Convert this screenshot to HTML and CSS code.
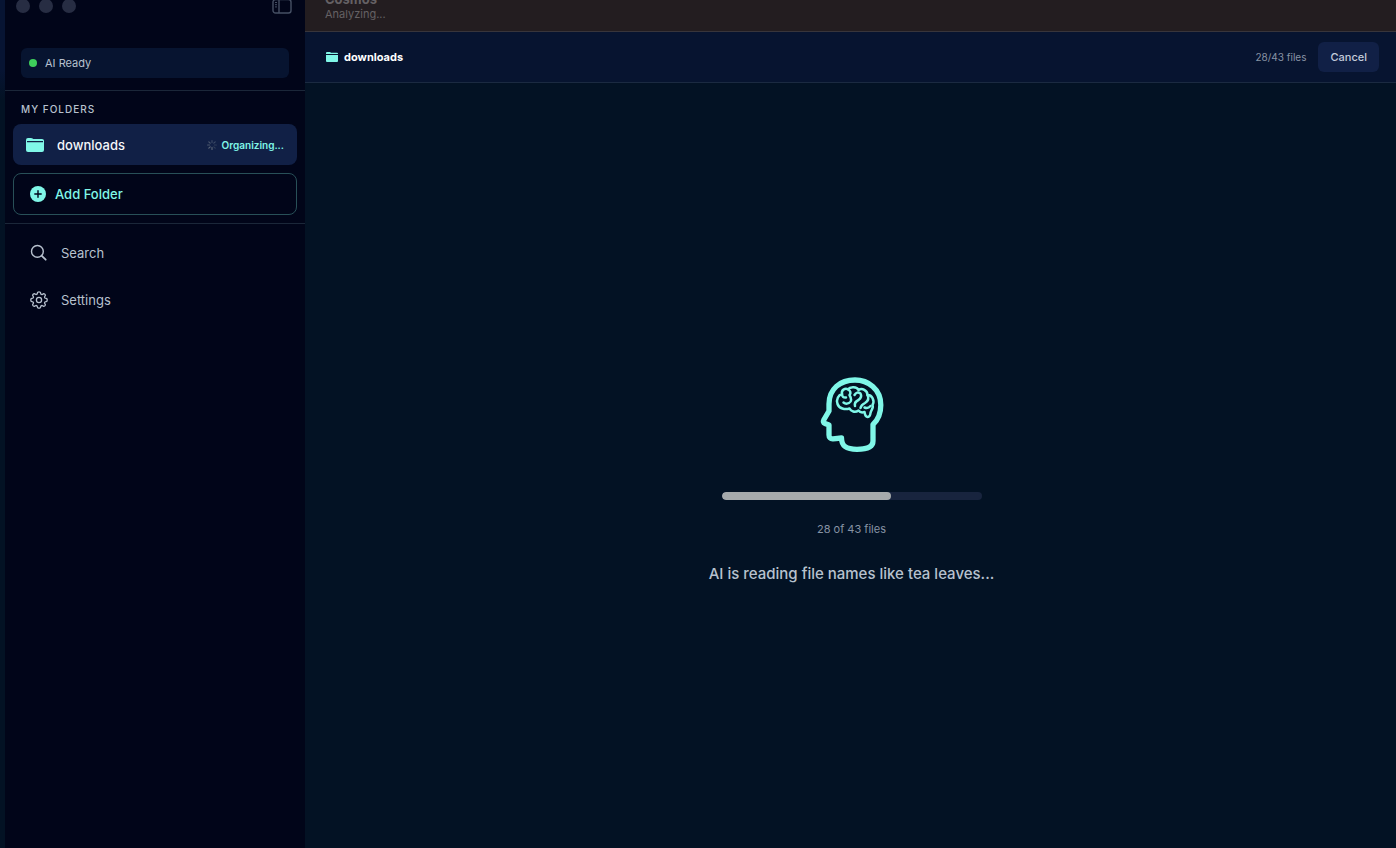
FILE: index.html
```html
<!DOCTYPE html>
<html lang="en">
<head>
    <meta charset="UTF-8">
    <meta name="viewport" content="width=device-width, initial-scale=1.0">
    <title>Cosmos</title>
    <link rel="stylesheet" href="styles.css">
</head>
<body>

    <aside class="sidebar">
        <div class="window-bar">
            <span class="dot"></span>
            <span class="dot"></span>
            <span class="dot"></span>
            <button class="toggle" aria-label="Toggle sidebar">
                <svg width="20" height="16" viewBox="0 0 20 16" fill="none" stroke="currentColor">
                    <rect x="1" y="1.500" width="18" height="13.500" rx="2.500" stroke-width="1.400"/>
                    <path d="M7 1.500v13.500" stroke-width="1.400"/>
                    <path d="M3 4.500h2M3 6.700h2M3 8.900h2" stroke-width="1"/>
                </svg>
            </button>
        </div>

        <div class="status"><span class="status-dot"></span>AI Ready</div>

        <section class="folders">
            <h2>MY FOLDERS</h2>
            <button class="folder">
                <svg width="18" height="14" viewBox="0 0 18 14">
                    <path d="M0 3V2Q0 0 2 0h3q1 0 1.6.6L7.3 1H16q2 0 2 2z" fill="currentColor"/>
                    <path d="M0 4.2h18V12q0 2-2 2H2q-2 0-2-2z" fill="currentColor"/>
                    <path d="M.5 2.5v3M17.5 2.500v3" stroke="currentColor"/>
                </svg>
                <span class="folder-name">downloads</span>
                <svg class="spinner" width="10" height="10" viewBox="0 0 10 10" stroke-width="1.200" stroke-linecap="round">
                    <path d="M5 .6v2M8.2 1.8L6.8 3.2" stroke="#3b4966"/>
                    <path d="M9.4 5h-2M8.2 8.2L6.8 6.8" stroke="#2f3c59"/>
                    <path d="M5 9.4v-2M1.8 8.2l1.4-1.4" stroke="#5a6476"/>
                    <path d="M.6 5h2M1.8 1.8l1.4 1.4" stroke="#4a566d"/>
                </svg>
                <span class="folder-state">Organizing...</span>
            </button>
            <button class="add-folder">
                <svg width="16" height="16" viewBox="0 0 16 16">
                    <circle cx="8" cy="8" r="8" fill="currentColor"/>
                    <path d="M8 4.8v6.4M4.8 8h6.4" stroke="#010519" stroke-width="1.4" stroke-linecap="round"/>
                </svg>
                Add Folder
            </button>
        </section>

        <nav class="menu">
            <a href="#search">
                <svg width="18" height="18" viewBox="0 0 18 18" fill="none" stroke="currentColor" stroke-width="1.4" stroke-linecap="round">
                    <circle cx="7.4" cy="7.4" r="5.9"/>
                    <path d="M11.8 11.8l3.900 3.900" stroke-width="1.8"/>
                </svg>
                Search
            </a>
            <a href="#settings">
                <svg width="18" height="18" viewBox="0 0 18 18" fill="none" stroke="currentColor" stroke-width="1.3" stroke-linejoin="round">
                    <circle cx="9" cy="9" r="2.6"/>
                    <path d="M7.7 1.2Q9 .4 10.3 1.2L11 3.2Q11.500 3.500 12 3.600L13.800 2.700Q15.100 3 15.400 4.200L14.500 6Q14.600 6.600 14.900 7L16.800 7.700Q17.600 9 16.800 10.300L14.900 11Q14.600 11.500 14.500 12L15.400 13.800Q15.100 15.100 13.800 15.400L12 14.500Q11.500 14.600 11 14.900L10.300 16.800Q9 17.600 7.700 16.800L7 14.900Q6.500 14.600 6 14.500L4.200 15.400Q2.900 15.100 2.600 13.800L3.500 12Q3.400 11.500 3.100 11L1.200 10.300Q.4 9 1.200 7.700L3.100 7Q3.400 6.500 3.500 6L2.600 4.200Q2.900 2.900 4.200 2.600L6 3.500Q6.500 3.400 7 3.200z"/>
                </svg>
                Settings
            </a>
        </nav>
    </aside>

    <main class="content">
        <header class="titlebar">
            <h1>Cosmos</h1>
            <p>Analyzing...</p>
        </header>

        <div class="toolbar">
            <svg width="12" height="10" viewBox="0 0 12 10">
                <path d="M0 2V1q0-1 1-1h3l1 .8h6q1 0 1 1V2z" fill="currentColor"/>
                <path d="M0 2.9h12V9q0 1-1 1H1q-1 0-1-1z" fill="currentColor"/>
            </svg>
            <h2>downloads</h2>
            <span class="count">28/43 files</span>
            <button class="cancel">Cancel</button>
        </div>

        <section class="progress-view">
            <svg width="64" height="76" viewBox="20 16 64 76" fill="none" stroke="currentColor" stroke-linecap="round" stroke-linejoin="round">
                <path stroke-width="5.300" d="M55 20C68 20 80.800 29 80.800 45C80.800 54 78 60 73 64.500V81C73 87 68 89.300 57 89.300C46 89.300 41.500 86 41.500 78L33 78.800Q29 79 29 75V65L25 63.500Q22.500 62.500 24 59.500L29 51V44C29 29 40 20 55 20Z"/>
                <g stroke-width="2.500">
                    <path d="M42 34C41 30 45 28 48 29.300C50 26.500 57 26.500 58.500 30C62 27.500 67.500 30.500 67.500 35C72 34.500 75 41 72.500 45C74 48 71 50 70.500 53C70 58.500 65.500 58.500 64.500 52C62 52.800 60 52.500 58.500 50.500C55 53 51 51.500 49.500 48.500C45 50 39 48.500 37.500 44C36 39 38.500 35 42 34Z"/>
                    <path d="M42 34Q42 38 46 37.500M48 29.300Q52 32 49.500 35Q53 41 49 43Q46 44.500 43.500 42.500M54.500 35Q57 31 60.500 33.500Q62.500 37 58.500 40Q54 42 55 46M67.500 35Q70 40 65 43Q61 45 60.500 48M70.500 46Q68 49 64.500 47.500"/>
                </g>
            </svg>
            <progress value="28" max="43" aria-label="Files analyzed"></progress>
            <p class="progress-count">28 of 43 files</p>
            <p class="message">AI is reading file names like tea leaves...</p>
        </section>
    </main>

</body>
</html>
```
FILE: styles.css
```css
* {
    box-sizing: border-box;
}

body {
    display: flex;
    min-height: 100vh;
    margin: 0;
    padding-left: 5px;
    font-family: Inter, 'Liberation Sans', sans-serif;
    background: linear-gradient(to bottom, #071433 70px, #031224 100px);
    color: #b7c1ce;
}

h1, h2, p {
    margin: 0;
}

svg {
    flex-shrink: 0;
}

button {
    border: none;
    font-family: inherit;
    cursor: pointer;
}

/* Sidebar */
.sidebar {
    width: 300px;
    flex-shrink: 0;
    background-color: #010519;
}

.window-bar {
    display: flex;
    align-items: flex-end;
    gap: 9px;
    height: 14px;
    padding: 0 13px 0 11px;
    overflow: hidden;
}

.dot {
    width: 14px;
    height: 14px;
    margin-bottom: 1px;
    border-radius: 50%;
    background-color: #272d43;
}

.toggle {
    display: flex;
    margin-left: auto;
    padding: 0;
    background: none;
    color: #465064;
}

.status {
    display: flex;
    align-items: center;
    gap: 8px;
    height: 30px;
    margin: 34px 16px 12px;
    padding: 0 8px;
    border-radius: 6px;
    background-color: #071430;
    font-size: 11px;
}

.status-dot {
    width: 8px;
    height: 8px;
    border-radius: 50%;
    background-color: #3ecf5b;
}

.folders {
    display: flex;
    flex-direction: column;
    padding: 11px 8px 8px;
    border-top: 1px solid #1b2739;
    border-bottom: 1px solid #1b2739;
}

.folders h2 {
    margin: 0 8px 8px;
    font-size: 10px;
    line-height: 14px;
    font-weight: 500;
    letter-spacing: 1px;
}

.folder {
    display: flex;
    align-items: center;
    height: 41px;
    margin-bottom: 8px;
    padding: 0 13px;
    border-radius: 8px;
    background-color: #112046;
    color: #80f7e8;
}

.folder-name {
    margin-left: 13px;
    font-size: 13px;
    font-weight: 500;
    color: #f4f6fa;
}

.spinner {
    margin-left: auto;
}

.folder-state {
    margin-left: 5px;
    font-size: 10px;
    line-height: 14px;
    font-weight: 600;
}

.add-folder {
    display: flex;
    align-items: center;
    gap: 9px;
    height: 42px;
    padding: 0 16px;
    border: 1px solid #285058;
    border-radius: 8px;
    background: none;
    color: #80f7e8;
    font-size: 13px;
    font-weight: 500;
}

.menu {
    padding-top: 5px;
}

.menu a {
    display: flex;
    align-items: center;
    gap: 13px;
    height: 47px;
    padding: 0 25px;
    color: #b7c1ce;
    font-size: 13px;
    text-decoration: none;
}

/* Main area */
.content {
    display: flex;
    flex-direction: column;
    flex: 1;
    background-color: #031224;
}

.titlebar {
    display: flex;
    flex-direction: column;
    justify-content: flex-end;
    height: 32px;
    padding: 0 20px 10px;
    border-bottom: 1px solid #38353b;
    background-color: #231d20;
    color: #656164;
    overflow: hidden;
}

.titlebar h1 {
    font-size: 13px;
    line-height: 16px;
    font-weight: 700;
}

.titlebar p {
    font-size: 11px;
    line-height: 14px;
}

.toolbar {
    display: flex;
    align-items: center;
    height: 51px;
    padding: 0 17px 0 21px;
    border-bottom: 1px solid #1b2a41;
    background-color: #071430;
    color: #80f7e8;
}

.toolbar h2 {
    margin-left: 6px;
    font-size: 11px;
    font-weight: 700;
    color: #ffffff;
}

.count {
    margin-left: auto;
    font-size: 10px;
    color: #8793a4;
}

.cancel {
    height: 30px;
    margin-left: 12px;
    padding: 0 12px;
    border-radius: 6px;
    background-color: #112046;
    color: #c3cbda;
    font-size: 11px;
    font-weight: 500;
}

.progress-view {
    display: flex;
    flex-direction: column;
    align-items: center;
    justify-content: center;
    flex: 1;
    padding-top: 28px;
    padding-left: 2px;
    color: #80f7e8;
}

progress {
    width: 260px;
    height: 8px;
    margin: 40px 0 21px;
    border: none;
    border-radius: 4px;
    background-color: #18243e;
    overflow: hidden;
    appearance: none;
}

progress::-webkit-progress-bar {
    background-color: #18243e;
}

progress::-webkit-progress-value {
    border-radius: 4px;
    background-color: #a6aaac;
}

.progress-count {
    margin-bottom: 27px;
    font-size: 11px;
    line-height: 16px;
    color: #8793a4;
}

.message {
    font-size: 15px;
    line-height: 20px;
    font-weight: 500;
    color: #b7c1ce;
}
```
